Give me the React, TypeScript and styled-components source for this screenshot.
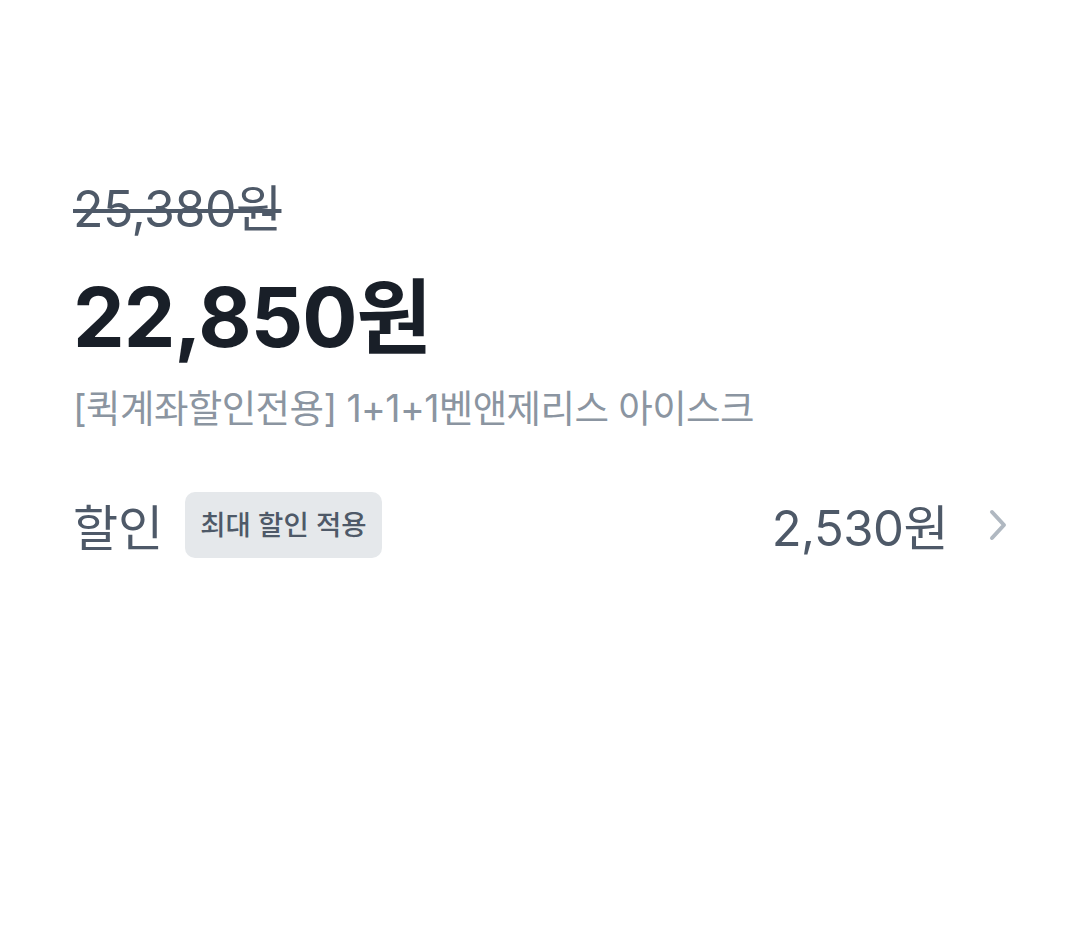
import styled, { createGlobalStyle } from "styled-components";

const GlobalStyle = createGlobalStyle`
  body {
    margin: 0;
    background: #ffffff;
    font-family: "Inter", "Noto Sans CJK KR", sans-serif;
  }
`;

const Page = styled.main`
  display: flex;
  flex-direction: column;
  padding: 176px 70px 0 73px;
  width: 1080px;
  box-sizing: border-box;
`;

const OriginalPrice = styled.del`
  font-size: 50px;
  line-height: 66px;
  color: #4e5968;
  text-decoration-thickness: 4px;
  letter-spacing: -0.5px;
`;

const SalePrice = styled.h1`
  margin: 28px 0 0;
  font-size: 82px;
  line-height: 96px;
  font-weight: 700;
  color: #191f28;
  letter-spacing: -1px;
`;

const ProductName = styled.p`
  margin: 18px 0 0;
  font-size: 37.5px;
  line-height: 50px;
  color: #8b95a1;
  letter-spacing: -0.6px;
`;

const DiscountRow = styled.div`
  display: flex;
  align-items: center;
  margin-top: 55px;
`;

const Label = styled.span`
  font-size: 49px;
  color: #4e5968;
`;

const Badge = styled.span`
  margin-left: 22px;
  padding: 14px 15px;
  background: #e5e8eb;
  border-radius: 10px;
  font-size: 27.5px;
  font-weight: 500;
  line-height: 38px;
  color: #4e5968;
`;

const Amount = styled.span`
  margin-left: auto;
  font-size: 49px;
  color: #4e5968;
  letter-spacing: -0.5px;
`;

const Chevron = styled.svg`
  margin-left: 36px;
  width: 26px;
  height: 34px;
`;

export default function App() {
  return (
    <>
      <GlobalStyle />
      <Page>
        <div>
          <OriginalPrice>25,380원</OriginalPrice>
        </div>
        <SalePrice>22,850원</SalePrice>
        <ProductName>[퀵계좌할인전용] 1+1+1벤앤제리스 아이스크</ProductName>
        <DiscountRow>
          <Label>할인</Label>
          <Badge>최대 할인 적용</Badge>
          <Amount>2,530원</Amount>
          <Chevron viewBox="0 0 26 34">
            <path d="M8 4 L20 17 L8 30" fill="none" stroke="#b0b8c1" strokeWidth="4" strokeLinecap="round" strokeLinejoin="round" />
          </Chevron>
        </DiscountRow>
      </Page>
    </>
  );
}
